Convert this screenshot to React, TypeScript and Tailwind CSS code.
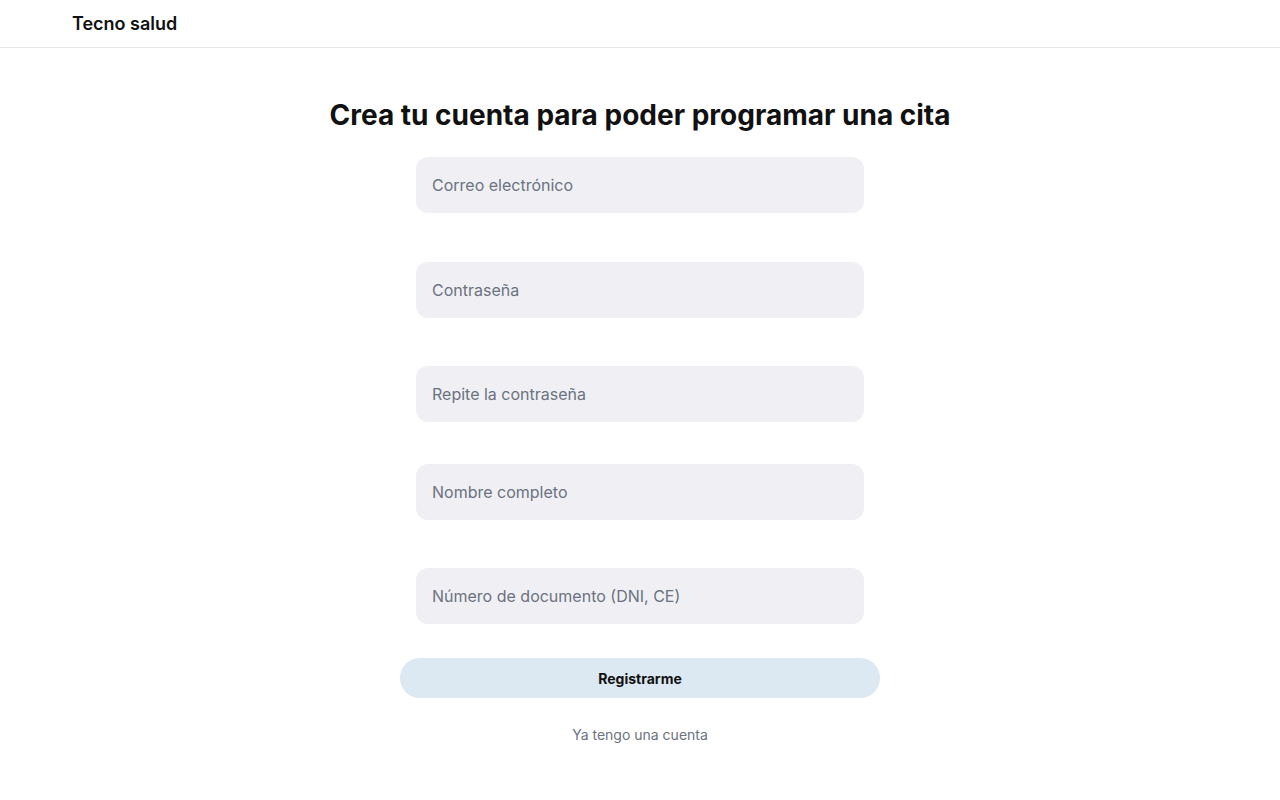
import { useState } from "react"

// Registro de pacientes: cabecera + formulario centrado.

type Field = { id: string; placeholder: string; type: string; gap: string }

const FIELDS: Field[] = [
  { id: "email", placeholder: "Correo electrónico", type: "email", gap: "" },
  { id: "password", placeholder: "Contraseña", type: "password", gap: "mt-[49px]" },
  { id: "password2", placeholder: "Repite la contraseña", type: "password", gap: "mt-[48px]" },
  { id: "name", placeholder: "Nombre completo", type: "text", gap: "mt-[42px]" },
  { id: "doc", placeholder: "Número de documento (DNI, CE)", type: "text", gap: "mt-[48px]" },
]

const Header = () => (
  <header className="h-[48px] border-b border-[#e5e7eb] bg-white">
    <div className="flex h-[47px] items-center px-[72px]">
      <span className="text-[18px] font-semibold leading-none text-[#111111]">Tecno salud</span>
    </div>
  </header>
)

export default function App() {
  const [values, setValues] = useState<Record<string, string>>({})

  return (
    <div className="min-h-screen bg-white font-['Inter','Liberation_Sans',sans-serif] text-[#111111]">
      <Header />
      <main className="flex flex-col items-center pt-[50px]">
        <h1 className="text-[28px] font-bold leading-[34px] text-[#111111]">
          Crea tu cuenta para poder programar una cita
        </h1>
        <form className="mt-[25px] flex w-[480px] flex-col items-center" onSubmit={(e) => e.preventDefault()}>
          {FIELDS.map((f) => (
            <input
              key={f.id}
              type={f.type}
              placeholder={f.placeholder}
              value={values[f.id] ?? ""}
              onChange={(e) => setValues({ ...values, [f.id]: e.target.value })}
              className={`${f.gap} h-[56px] w-[448px] rounded-[12px] bg-[#f0f0f4] px-4 text-[16px] text-[#111111] outline-none placeholder:text-[#6b7280]`}
            />
          ))}
          <button
            type="submit"
            className="mt-[34px] h-[40px] w-[480px] rounded-full bg-[#dce8f2] text-[14px] font-bold text-[#111111]"
          >
            Registrarme
          </button>
          <a href="#" className="mt-[27px] text-[14px] leading-[20px] text-[#6b7280]">
            Ya tengo una cuenta
          </a>
        </form>
      </main>
    </div>
  )
}
